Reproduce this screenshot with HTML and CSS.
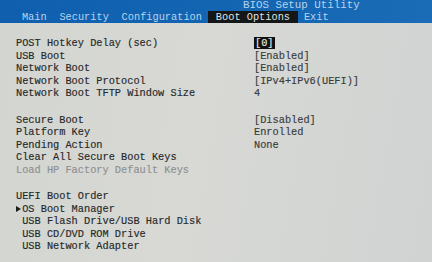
FILE: index.html
```html
<!DOCTYPE html>
<html>
<head>
<meta charset="utf-8">
<link rel="stylesheet" href="styles.css">
</head>
<body>
<div class="screen">
  <header class="header">
    <div class="title">BIOS Setup Utility</div>
    <nav class="menu">
      <span class="tab">Main</span>
      <span class="tab">Security</span>
      <span class="tab">Configuration</span>
      <span class="tab active">Boot Options</span>
      <span class="tab">Exit</span>
    </nav>
  </header>
  <main class="content">
    <section class="group">
      <div class="label">POST Hotkey Delay (sec)</div><div class="value"><span class="sel">[0]</span></div>
      <div class="label">USB Boot</div><div class="value">[Enabled]</div>
      <div class="label">Network Boot</div><div class="value">[Enabled]</div>
      <div class="label">Network Boot Protocol</div><div class="value">[IPv4+IPv6(UEFI)]</div>
      <div class="label">Network Boot TFTP Window Size</div><div class="value">4</div>
    </section>
    <section class="group">
      <div class="label">Secure Boot</div><div class="value">[Disabled]</div>
      <div class="label">Platform Key</div><div class="value">Enrolled</div>
      <div class="label">Pending Action</div><div class="value">None</div>
      <div class="label">Clear All Secure Boot Keys</div><div class="value"></div>
      <div class="label dim">Load HP Factory Default Keys</div><div class="value"></div>
    </section>
    <section class="list">
      <div class="item">UEFI Boot Order</div>
      <div class="item sub current"><span class="arrow"></span>OS Boot Manager</div>
      <div class="item sub">USB Flash Drive/USB Hard Disk</div>
      <div class="item sub">USB CD/DVD ROM Drive</div>
      <div class="item sub">USB Network Adapter</div>
    </section>
  </main>
</div>
</body>
</html>
```

FILE: styles.css
```css
html, body {
  margin: 0;
  padding: 0;
}
body {
  width: 432px;
  height: 262px;
  overflow: hidden;
  font-family: "Liberation Mono", "DejaVu Sans Mono", monospace;
  font-size: 10.3px;
}
.screen {
  width: 432px;
  height: 262px;
  background: linear-gradient(100deg, #d3d5d1 0%, #d8d9d5 45%, #d0d3d2 100%);
  color: #262929;
}
.header {
  height: 23px;
  background: linear-gradient(90deg, #0f5fae 0%, #1466b3 60%, #1a6cb6 100%);
  color: #b9d3ec;
  display: flex;
  flex-direction: column;
}
.title {
  height: 11px;
  line-height: 11px;
  padding-left: 243px;
  font-size: 10.8px;
}
.menu {
  display: flex;
  padding-left: 15.5px;
  height: 12px;
  line-height: 13px;
}
.tab {
  padding: 0 6.4px;
}
.tab.active {
  background: #141617;
  color: #dfe3e3;
  padding: 0 7.5px;
}
.content {
  padding: 14px 0 0 16px;
  line-height: 12.5px;
  -webkit-text-stroke: 0.15px currentColor;
}
.group {
  display: grid;
  grid-template-columns: 238px auto;
  margin-bottom: 14px;
}
.value {
  color: #393c3c;
}
.sel {
  background: #111;
  color: #e8e8e8;
  padding: 0 1px;
}
.dim {
  color: #8d9091;
}
.item.sub {
  padding-left: 6.2px;
}
.item.current {
  padding-left: 0;
  display: flex;
  align-items: center;
}
.arrow {
  display: inline-block;
  width: 0;
  height: 0;
  border-top: 3.5px solid transparent;
  border-bottom: 3.5px solid transparent;
  border-left: 5px solid #1c1e1e;
  margin: 0 1.2px 0 0;
}
```
